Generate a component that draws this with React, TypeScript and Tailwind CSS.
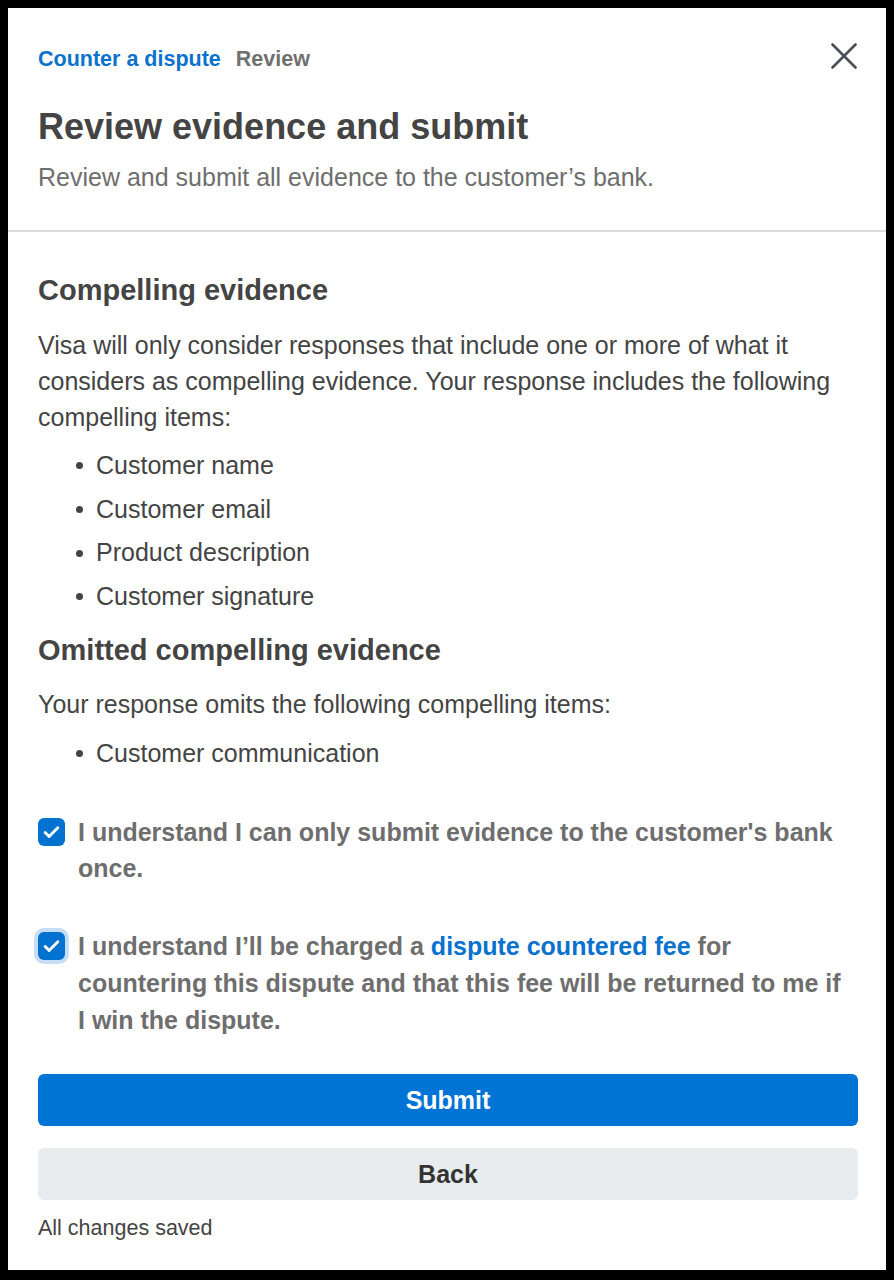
import { Check } from 'lucide-react';

const compelling = ['Customer name', 'Customer email', 'Product description', 'Customer signature'];
const omitted = ['Customer communication'];

function Bullets({ items, className }: { items: string[]; className: string }) {
  return (
    <ul className={`flex flex-col ${className}`}>
      {items.map((item) => (
        <li key={item} className="flex items-center h-[43.67px] pl-[38px]">
          <span className="w-[7px] h-[7px] rounded-full bg-[#444] mr-[13px]" />
          <span>{item}</span>
        </li>
      ))}
    </ul>
  );
}

function Checkbox({ focused, offset }: { focused?: boolean; offset: string }) {
  return (
    <span
      className={`${offset} flex-shrink-0 w-[27px] h-[28px] rounded-[6px] bg-[#0073d1] flex items-center justify-center ${
        focused ? 'ring-4 ring-[#c7ddf6]' : ''
      }`}
    >
      <Check className="w-[19px] h-[19px] text-white" strokeWidth={3.6} />
    </span>
  );
}

export default function App() {
  return (
    <div
      className="bg-black h-[1280px] pt-2 pl-2 pr-[8px] pb-[10px] text-[#444]"
      style={{ fontFamily: '"Liberation Sans", Arial, sans-serif' }}
    >
      <div className="bg-white h-full flex flex-col">
        <header className="relative pl-[30px] pr-[28px] pt-[38px] pb-[38px] border-b-2 border-[#dcdcdc]">
          <nav className="flex gap-[15px] text-[21.5px] font-bold leading-[26px]">
            <span className="text-[#0a72cc]">Counter a dispute</span>
            <span className="text-[#707070]">Review</span>
          </nav>
          <button className="absolute top-[35px] right-[29px] text-[#4a4f5a]">
            <svg width="26" height="26" viewBox="0 0 26 26" fill="none" stroke="currentColor" strokeWidth="2.6" strokeLinecap="round">
              <path d="M1.5 1.5L24.5 24.5M24.5 1.5L1.5 24.5" />
            </svg>
          </button>
          <h1 className="mt-[33px] text-[36px] font-bold leading-[44px]">Review evidence and submit</h1>
          <p className="mt-[13px] text-[25px] leading-[30px] text-[#6e6e6e]">
            Review and submit all evidence to the customer’s bank.
          </p>
        </header>

        <main className="flex-1 flex flex-col pl-[30px] pr-[28px] pt-[41px] text-[25px]">
          <h2 className="text-[29px] font-bold leading-[34px]">Compelling evidence</h2>
          <p className="mt-[20px] leading-[36px]">
            Visa will only consider responses that include one or more of what it considers as compelling
            evidence. Your response includes the following compelling items:
          </p>
          <Bullets items={compelling} className="mt-[9px]" />

          <h2 className="mt-[14px] text-[29px] font-bold leading-[34px]">Omitted compelling evidence</h2>
          <p className="mt-[19px] leading-[36px]">Your response omits the following compelling items:</p>
          <Bullets items={omitted} className="mt-[10px]" />

          <label className="mt-[39px] flex gap-[13px] font-bold text-[#6e6e6e] leading-[36px]">
            <Checkbox offset="mt-[4px]" />
            <span className="pr-[8px]">I understand I can only submit evidence to the customer's bank once.</span>
          </label>

          <label className="mt-[41.5px] flex gap-[13px] font-bold text-[#6e6e6e] leading-[37px]">
            <Checkbox focused offset="mt-[4.5px]" />
            <span className="pr-[8px]">
              I understand I’ll be charged a <span className="text-[#0a72cc]">dispute countered fee</span> for
              countering this dispute and that this fee will be returned to me if I win the dispute.
            </span>
          </label>

          <button className="mt-[35.5px] h-[52px] rounded-[6px] bg-[#0074d4] text-white text-[25px] font-bold">
            Submit
          </button>
          <button className="mt-[22px] h-[52px] rounded-[6px] bg-[#e9ecef] text-[#333] text-[25px] font-bold">
            Back
          </button>
          <p className="mt-[15px] text-[21.5px] leading-[26px] text-[#444]">All changes saved</p>
        </main>
      </div>
    </div>
  );
}
